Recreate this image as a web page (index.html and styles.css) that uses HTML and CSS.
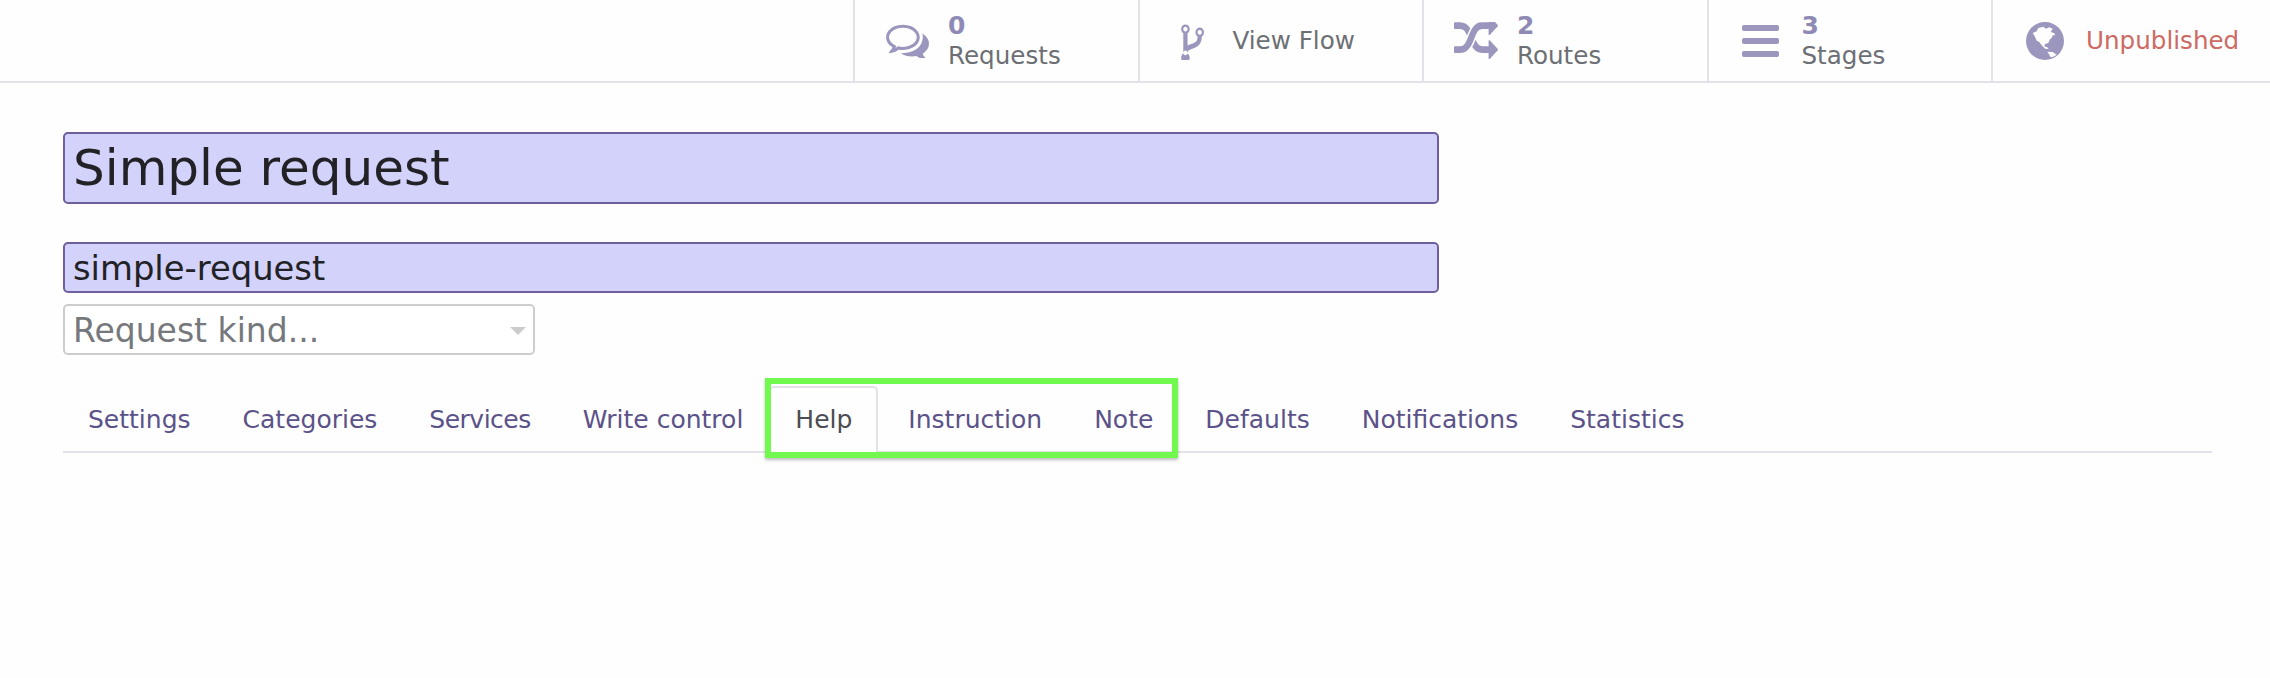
FILE: index.html
```html
<!DOCTYPE html>
<html lang="en">
<head>
<meta charset="utf-8">
<title>Simple request</title>
<link rel="stylesheet" href="styles.css">
</head>
<body>
<header class="topbar">
  <a class="stat">
    <span class="stat-icon"><svg class="ic-comments" viewBox="0 230 1792 1370" preserveAspectRatio="none"><path d="M704 384q-153 0-286 52t-211.5 141-78.5 191q0 82 53 158t149 132l97 56-35 84q34-20 62-39l44-31 53 10q78 14 153 14 153 0 286-52t211.5-141 78.5-191-78.5-191-211.5-141-286-52zm0-128q191 0 353.5 68.5t256.5 186.5 94 257-94 257-256.5 186.5-353.5 68.5q-86 0-176-16-124 88-278 128-36 9-86 16h-3q-11 0-20.5-8t-11.5-21q-1-3-1-6.5t.5-6.5 2-6l2.5-5 3.5-5.5 4-5 4.5-5 4-4.5q5-6 23-25t26-29.5 22.5-29 25-38.5 20.5-44q-124-72-195-177t-71-224q0-139 94-257t256.5-186.5 353.5-68.5zm822 1169q10 24 20.5 44t25 38.5 22.5 29 26 29.5 23 25q1 1 4 4.5t4.5 5 4 5 3.5 5.5l2.5 5 2 6 .5 6.5-1 6.5q-3 14-13 22t-22 7q-50-7-86-16-154-40-278-128-90 16-176 16-271 0-472-132 58 4 88 4 161 0 309-45t264-129q125-92 192-212t67-254q0-77-23-152 129 71 204 178t75 230q0 120-71 224.5t-195 176.5z"/></svg></span>
    <span class="stat-text"><b class="num">0</b><span class="label">Requests</span></span>
  </a>
  <a class="stat">
    <span class="stat-icon"><svg class="ic-fork" viewBox="192 128 1120 1536" preserveAspectRatio="none"><path d="M576 1376q0-40-28-68t-68-28-68 28-28 68 28 68 68 28 68-28 28-68zm0-960q0-40-28-68t-68-28-68 28-28 68 28 68 68 28 68-28 28-68zm640 128q0-40-28-68t-68-28-68 28-28 68 28 68 68 28 68-28 28-68zm96 0q0 52-26 96.5t-70 69.5q-2 287-226 414-67 38-203 81-128 40-169.5 71t-41.5 100v26q44 25 70 69.5t26 96.5q0 80-56 136t-136 56-136-56-56-136q0-52 26-96.5t70-69.5v-820q-44-25-70-69.5t-26-96.5q0-80 56-136t136-56 136 56 56 136q0 52-26 96.5t-70 69.5v497q54-26 154-57 55-17 87.5-29.5t70.5-31 59-39.5 40.5-51 28-69.5 8.5-91.5q-44-25-70-69.5t-26-96.5q0-80 56-136t136-56 136 56 56 136z"/></svg></span>
    <span class="stat-text"><span class="label">View Flow</span></span>
  </a>
  <a class="stat">
    <span class="stat-icon"><svg class="ic-random" viewBox="0 250 1792 1420" preserveAspectRatio="none"><path d="M666 481q-60 92-137 273-22-45-37-72.5t-40.5-63.5-51-56.5-63-35-81.5-14.5h-224q-14 0-23-9t-9-23v-192q0-14 9-23t23-9h224q250 0 410 225zm1126 799q0 14-9 23l-320 320q-9 9-23 9-13 0-22.5-9.5t-9.5-22.5v-192q-32 0-85 .5t-81 1-73-1-71-5-64-10.5-63-18.5-58-28.5-59-40-55-53.5-56-69.5q59-93 136-273 22 45 37 72.5t40.5 63.5 51 56.5 63 35 81.5 14.5h256v-192q0-14 9-23t23-9q12 0 24 10l319 319q9 9 9 23zm0-896q0 14-9 23l-320 320q-9 9-23 9-13 0-22.5-9.5t-9.5-22.5v-192h-256q-48 0-87 15t-69 45-51 61.5-45 77.5q-32 62-78 171-29 66-49.5 111t-54 105-64 100-74 83-90 68.5-106.5 42-128 16.5h-224q-14 0-23-9t-9-23v-192q0-14 9-23t23-9h224q48 0 87-15t69-45 51-61.5 45-77.5q32-62 78-171 29-66 49.5-111t54-105 64-100 74-83 90-68.5 106.5-42 128-16.5h256v-192q0-14 9-23t23-9q12 0 24 10l319 319q9 9 9 23z"/></svg></span>
    <span class="stat-text"><b class="num">2</b><span class="label">Routes</span></span>
  </a>
  <a class="stat">
    <span class="stat-icon"><svg class="ic-bars" viewBox="0 0 37 32"><rect width="37" height="6" rx="2"/><rect y="13" width="37" height="6" rx="2"/><rect y="26" width="37" height="6" rx="2"/></svg></span>
    <span class="stat-text"><b class="num">3</b><span class="label">Stages</span></span>
  </a>
  <a class="stat">
    <span class="stat-icon"><svg class="ic-globe" viewBox="0 0 38 38"><path fill-rule="evenodd" d="M19 0a19 19 0 1 0 0 38a19 19 0 1 0 0-38zM6.700 11L10.700 9.300L12.300 6L17.300 4.700L20 6.700L23.300 5.300L26.700 6.700L24.700 10L28 11L29.300 13.300L26.700 13.300L25.700 16L24 17.300L22.300 21L19 22L18.300 24.300L21.300 25.300L22.700 27L19 26.700L15.700 23.300L13.300 20L10.700 18.700L8.700 14.300zM21.300 29.700L26.700 30L30.700 32.700L27.300 34.700L24.700 35.300L23.300 32.700z"/></svg></span>
    <span class="stat-text"><span class="label label-danger">Unpublished</span></span>
  </a>
</header>
<main class="content">
  <div class="field field-title">Simple request</div>
  <div class="field field-slug">simple-request</div>
  <div class="select"><span>Request kind...</span><i class="caret"></i></div>
  <nav class="tabs">
    <a class="tab">Settings</a>
    <a class="tab">Categories</a>
    <a class="tab tab-tight">Services</a>
    <a class="tab">Write control</a>
    <a class="tab tab-active">Help</a>
    <a class="tab">Instruction</a>
    <a class="tab">Note</a>
    <a class="tab">Defaults</a>
    <a class="tab">Notifications</a>
    <a class="tab">Statistics</a>
    <div class="annotation"></div>
  </nav>
</main>
</body>
</html>
```
FILE: styles.css
```css
* { box-sizing: border-box; }
html, body { margin: 0; padding: 0; }
body {
  background: #fefefe;
  font-family: "DejaVu Sans", sans-serif;
  height: 678px;
  overflow: hidden;
}
.topbar {
  display: grid;
  grid-template-columns: repeat(4, 284.5px) 1fr;
  height: 83px;
  padding-left: 853px;
  border-bottom: 2px solid #e3e2e9;
}
.stat {
  display: flex;
  align-items: center;
  padding-left: 22px;
  border-left: 2px solid #e3e2e9;
}
.stat-icon {
  display: flex;
  justify-content: center;
  align-items: center;
  width: 60px;
  margin-right: 11px;
  flex: none;
}
.stat-icon svg { display: block; fill: #9a96bd; }
.ic-comments { width: 43px; height: 34px; }
.ic-fork { width: 25px; height: 38px; }
.ic-random { width: 44px; height: 38px; }
.ic-bars { width: 37px; height: 32px; }
.ic-globe { width: 38px; height: 38px; }
.stat-text { display: flex; flex-direction: column; }
.num {
  font-size: 25px;
  line-height: 30px;
  font-weight: 700;
  color: #8f8ab5;
}
.label {
  font-size: 24.6px;
  line-height: 30px;
  color: #6c6f73;
}
.label-danger { color: #cc6a63; }
.content { padding: 49px 58px 0 63px; }
.field {
  width: 1376px;
  background: #d3d2fa;
  border: 2px solid #6f5f9d;
  border-radius: 5px;
  color: #222226;
  padding-left: 8px;
}
.field-title {
  height: 72px;
  font-size: 50px;
  line-height: 68px;
}
.field-slug {
  height: 51px;
  margin-top: 38px;
  font-size: 33.800px;
  line-height: 49px;
}
.select {
  display: flex;
  align-items: center;
  justify-content: space-between;
  width: 472px;
  height: 51px;
  margin-top: 11px;
  padding: 2px 7px 0 8px;
  border: 2px solid #cccccc;
  border-radius: 5px;
  background: #ffffff;
  color: #75787c;
  font-size: 33px;
}
.caret {
  width: 0;
  height: 0;
  border-left: 8px solid transparent;
  border-right: 8px solid transparent;
  border-top: 8px solid #cccccc;
}
.tabs {
  position: relative;
  display: flex;
  height: 67px;
  margin-top: 31px;
  border-bottom: 2px solid #e3e2e9;
}
.tab {
  height: 67px;
  padding: 0 24px;
  border: 2px solid transparent;
  border-bottom: 0;
  color: #5b5289;
  font-size: 25px;
  line-height: 64px;
  white-space: nowrap;
}
.tab:first-child { padding-left: 23px; }
.tab-tight { letter-spacing: -0.5px; }
.tab-active {
  margin-right: 4px;
  color: #4a4d52;
  background: #fefefe;
  border-color: #e3e2e9;
  border-radius: 5px 5px 0 0;
}
.annotation {
  position: absolute;
  left: 702px;
  top: -8px;
  width: 413px;
  height: 80px;
  border: 6px solid #72f94f;
  box-shadow: 0 2px 3px rgba(0, 0, 0, 0.25);
  pointer-events: none;
}
```
